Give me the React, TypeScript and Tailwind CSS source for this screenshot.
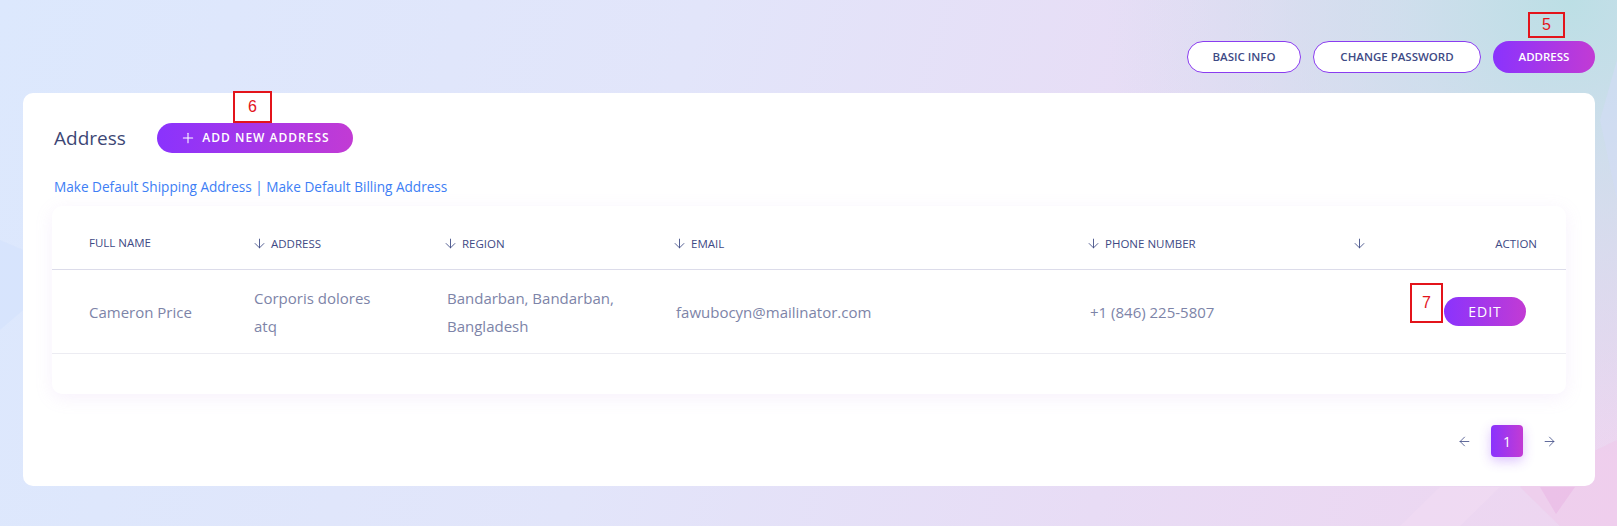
import { ArrowDown, ArrowLeft, ArrowRight, Plus } from 'lucide-react';

const rows = [
  {
    name: 'Cameron Price',
    address: ['Corporis dolores', 'atq'],
    region: ['Bandarban, Bandarban,', 'Bangladesh'],
    email: 'fawubocyn@mailinator.com',
    phone: '+1 (846) 225-5807',
  },
];

const cols = 'grid grid-cols-[167px_191px_229px_414px_268px_1fr]';

function Marker({ n, className }: { n: string; className: string }) {
  return (
    <div
      className={`absolute border-2 border-[#e3141b] text-[#e3141b] flex items-center justify-center text-[16px] leading-none font-['Liberation_Sans',sans-serif] ${className}`}
    >
      {n}
    </div>
  );
}

function SortHead({ label }: { label: string }) {
  return (
    <div className="flex items-center gap-[4px] pl-[33px]">
      <ArrowDown size={15} strokeWidth={1.4} className="text-[#3e4a85]" />
      <span>{label}</span>
    </div>
  );
}

const tab = 'h-[32px] rounded-full text-[11.5px] font-semibold uppercase';

export default function App() {
  return (
    <div className="relative min-h-screen overflow-hidden font-['Open_Sans',sans-serif] bg-[radial-gradient(circle_at_97%_0%,#bcdfe5_0%,rgba(196,224,234,0.7)_10%,rgba(230,225,245,0)_28%),linear-gradient(105deg,#dce8fd_0%,#e2e5fa_40%,#e8dcf5_70%,#eed5f0_100%)]">
      {/* background facets */}
      <svg className="absolute inset-0 w-full h-full pointer-events-none" viewBox="0 0 1617 526" preserveAspectRatio="none">
        <polygon points="0,240 70,270 0,330" fill="#d4e2fc" opacity="0.7" />
        <polygon points="1520,487 1617,440 1617,526 1560,526" fill="#f0c8ea" opacity="0.5" />
        <polygon points="1540,487 1575,487 1556,514" fill="#eab8e4" opacity="0.6" />
        <polygon points="1440,487 1500,487 1460,526 1400,526" fill="#f2dcf3" opacity="0.6" />
        <polygon points="1617,60 1600,120 1617,200" fill="#d2dcf5" opacity="0.6" />
      </svg>

      <div className="relative flex justify-end gap-[12px] pt-[41px] pr-[22px] text-[#3e4a85]">
        <button className={`${tab} w-[114px] border border-[#8a3cf0] bg-white`}>Basic Info</button>
        <button className={`${tab} w-[168px] border border-[#8a3cf0] bg-white`}>Change Password</button>
        <button className={`${tab} w-[102px] bg-[linear-gradient(90deg,#8a33fd,#c23bd4)] text-white`}>Address</button>
      </div>

      <div className="relative mr-[22px] ml-[23px] mt-[20px] rounded-[10px] bg-white px-[29px] pt-[30px] pb-[29px]">
        <div className="flex items-center h-[30px] pl-[2px]">
          <h2 className="text-[19px] text-[#3d4775] w-[103px]">Address</h2>
          <button className="flex items-center justify-center gap-[6px] h-[30px] w-[196px] rounded-full bg-[linear-gradient(90deg,#8a33fd,#c23bd4)] text-white text-[12px] font-semibold tracking-[1px] uppercase">
            <Plus size={16} strokeWidth={1.6} />
            Add New Address
          </button>
        </div>

        <div className="mt-[24px] pl-[2px] text-[13.6px] leading-[20px] text-[#3d7ef5]">
          <a>Make Default Shipping Address</a> | <a>Make Default Billing Address</a>
        </div>

        <div className="mt-[9px] rounded-[10px] bg-white shadow-[0_4px_18px_rgba(190,150,230,0.13)] pb-[40px]">
          <div className={`${cols} pt-[30px] pb-[18px] border-b border-[#dcdcea] text-[11.5px] uppercase leading-[14px] text-[#3e4a85]`}>
            <div className="pl-[37px]">Full Name</div>
            <SortHead label="Address" />
            <SortHead label="Region" />
            <SortHead label="Email" />
            <SortHead label="Phone Number" />
            <div className="flex items-center justify-between pr-[29px]">
              <div className="pl-[31px]">
                <ArrowDown size={15} strokeWidth={1.4} className="text-[#3e4a85]" />
              </div>
              <span>Action</span>
            </div>
          </div>

          {rows.map((r) => (
            <div
              key={r.email}
              className={`${cols} items-center h-[84px] border-b border-[#ececf2] text-[15px] leading-[28px] text-[#7d84a8]`}
            >
              <div className="pl-[37px]">{r.name}</div>
              <div className="pl-[35px]">
                {r.address.map((l) => (
                  <div key={l}>{l}</div>
                ))}
              </div>
              <div className="pl-[37px]">
                {r.region.map((l) => (
                  <div key={l}>{l}</div>
                ))}
              </div>
              <div className="pl-[37px]">{r.email}</div>
              <div className="pl-[37px]">{r.phone}</div>
              <div className="flex justify-end pr-[40px]">
                <button className="h-[29px] w-[82px] rounded-full bg-[linear-gradient(90deg,#8a33fd,#c23bd4)] text-white text-[14px] font-medium tracking-[1px] uppercase">
                  Edit
                </button>
              </div>
            </div>
          ))}
        </div>

        <div className="mt-[31px] flex items-center justify-end gap-[19px] pr-[9px]">
          <ArrowLeft size={15} strokeWidth={1.3} className="text-[#3e4a85]" />
          <div className="flex h-[32px] w-[32px] items-center justify-center rounded-[4px] bg-[linear-gradient(90deg,#8a33fd,#c23bd4)] text-[14px] text-white shadow-[0_4px_12px_rgba(140,60,250,0.3)]">
            1
          </div>
          <ArrowRight size={15} strokeWidth={1.3} className="text-[#3e4a85]" />
        </div>
      </div>

      <Marker n="5" className="left-[1528px] top-[12px] w-[37px] h-[26px] bg-transparent" />
      <Marker n="6" className="left-[233px] top-[91px] w-[39px] h-[32px] bg-white" />
      <Marker n="7" className="left-[1410px] top-[283px] w-[33px] h-[40px] bg-white" />
    </div>
  );
}
